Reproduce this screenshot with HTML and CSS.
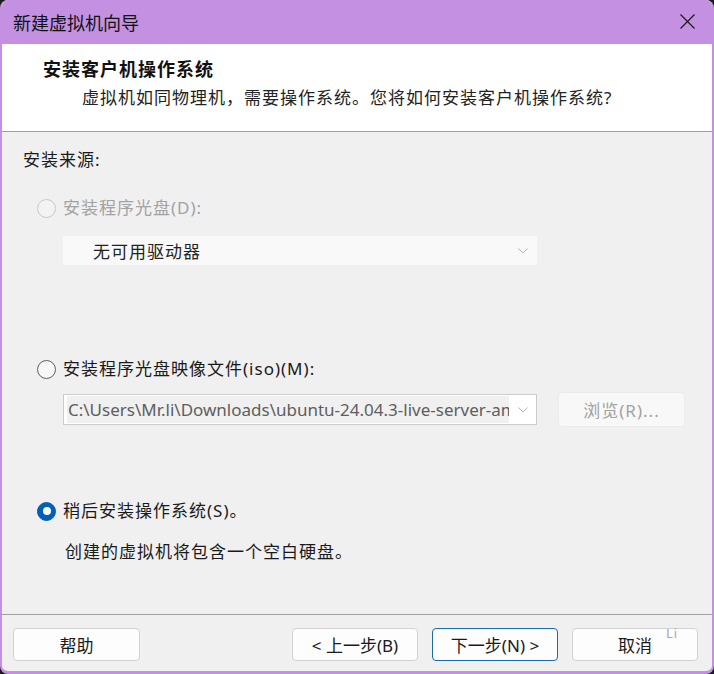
FILE: index.html
```html
<!DOCTYPE html>
<html lang="zh-CN">
<head>
  <meta charset="UTF-8" />
  <title>新建虚拟机向导</title>
  <link rel="stylesheet" href="styles.css">
</head>
<body>
  <div class="window">
    <div class="titlebar">
      <span class="title">新建虚拟机向导</span>
      <svg class="close" width="15" height="15" viewBox="0 0 15 15">
        <path d="M0.5 0.5 L14.5 14.5 M14.5 0.5 L0.5 14.5" stroke="#1a1a1a" stroke-width="1.2" fill="none" />
      </svg>
    </div>

    <div class="header">
      <div class="heading">安装客户机操作系统</div>
      <div class="subtitle">虚拟机如同物理机，需要操作系统。您将如何安装客户机操作系统?</div>
    </div>

    <div class="content">
      <div class="section-label">安装来源:</div>

      <div class="option disabled">
        <span class="radio"></span>
        <span class="label">安装程序光盘(D):</span>
      </div>
      <div class="combo combo-off">
        <span class="combo-text">无可用驱动器</span>
        <svg class="chev" width="10" height="6" viewBox="0 0 10 6">
          <path d="M0.5 0.5 L5 5 L9.5 0.5" stroke="#b4b4b4" fill="none" />
        </svg>
      </div>

      <div class="option option-iso">
        <span class="radio"></span>
        <span class="label">安装程序光盘映像文件(iso)(M):</span>
      </div>
      <div class="iso-row">
        <div class="combo combo-iso">
          <span class="combo-text path">C:\Users\Mr.li\Downloads\ubuntu-24.04.3-live-server-amd64.iso</span>
          <svg class="chev" width="10" height="6" viewBox="0 0 10 6">
            <path d="M0.5 0.5 L5 5 L9.5 0.5" stroke="#b4b4b4" fill="none" />
          </svg>
        </div>
        <button class="btn btn-browse" disabled>浏览(R)...</button>
      </div>

      <div class="option option-later">
        <span class="radio checked"></span>
        <span class="label">稍后安装操作系统(S)。</span>
      </div>
      <div class="desc">创建的虚拟机将包含一个空白硬盘。</div>
    </div>

    <div class="footer">
      <button class="btn btn-help">帮助</button>
      <div class="nav">
        <button class="btn">&lt; 上一步(B)</button>
        <button class="btn btn-default">下一步(N) &gt;</button>
        <button class="btn">取消</button>
      </div>
      <span class="mark">Li</span>
    </div>
  </div>
</body>
</html>
```

FILE: styles.css
```css
body {
  margin: 0;
  padding: 0;
  background: #1c1c1c;
  font-family: "Noto Sans", "Noto Sans CJK SC", sans-serif;
  font-size: 17px;
  color: #1a1a1a;
}

.window {
  width: 714px;
  height: 674px;
  box-sizing: border-box;
  background: #f0f0f0;
  border: 2px solid #c491e2;
  border-top: none;
  border-bottom-width: 3px;
  border-radius: 8px;
  overflow: hidden;
  display: flex;
  flex-direction: column;
}

.titlebar {
  height: 44px;
  flex: none;
  background: #c491e2;
  display: flex;
  align-items: center;
  justify-content: space-between;
  padding: 0 17px 0 11px;
}

.title {
  font-size: 18px;
  color: #111;
}

.close {
  margin-top: -1px;
}

.header {
  height: 88px;
  flex: none;
  box-sizing: border-box;
  background: #fff;
  border-bottom: 1px solid #a0a0a0;
  padding: 13px 0 0 41px;
  letter-spacing: 1px;
}

.heading {
  font-size: 18px;
  font-weight: bold;
  line-height: 24px;
  color: #111;
}

.subtitle {
  margin: 5px 0 0 39px;
  line-height: 24px;
  color: #222;
}

.content {
  flex: 1;
  padding: 16px 0 0 21px;
  letter-spacing: 1px;
}

.section-label {
  line-height: 24px;
}

.option {
  display: flex;
  align-items: center;
  gap: 7px;
  margin-left: 14px;
  line-height: 24px;
  margin-top: 24px;
}

.option.disabled {
  color: #a2a2a2;
}

.radio {
  width: 17px;
  height: 17px;
  border-radius: 50%;
  border: 1px solid #5c5c5c;
  background: #f7f7f7;
  flex: none;
  box-sizing: content-box;
}

.disabled .radio {
  border-color: #c8c8c8;
  background: #f3f3f3;
}

.radio.checked {
  border-color: #005fb8;
  background: #005fb8;
  display: flex;
  align-items: center;
  justify-content: center;
}

.radio.checked::after {
  content: "";
  width: 8px;
  height: 8px;
  border-radius: 50%;
  background: #fff;
}

.combo {
  width: 474px;
  box-sizing: border-box;
  margin-left: 40px;
  display: flex;
  align-items: center;
  justify-content: space-between;
}

.combo-off {
  height: 29px;
  margin-top: 16px;
  background: #f9f9f9;
  padding: 0 9px 0 30px;
}

.combo-text {
  color: #222;
  white-space: nowrap;
  overflow: hidden;
}

.option-iso {
  margin-top: 92px;
}

.iso-row {
  display: flex;
  align-items: center;
  gap: 21px;
  margin-top: 11px;
}

.combo-iso {
  height: 31px;
  background: #fff;
  border: 1px solid #cbcbcb;
  padding: 0 8px 0 3px;
}

.path {
  font-size: 17px;
  letter-spacing: 0;
  color: #5e5e5e;
  background: #f0f0f0;
  width: 441px;
  padding-left: 1px;
  line-height: 27px;
}

.btn {
  width: 126px;
  height: 33px;
  box-sizing: border-box;
  background: #fdfdfd;
  border: 1px solid #d2d2d2;
  border-radius: 4px;
  font-family: "Noto Sans", "Noto Sans CJK SC", sans-serif;
  font-size: 17px;
  color: #1a1a1a;
  padding: 0;
}

.btn-help {
  width: 127px;
}

.btn-browse {
  width: 127px;
  height: 35px;
  background: #f8f8f8;
  border-color: #ebebeb;
  color: #a2a2a2;
  letter-spacing: 1px;
}

.option-later {
  margin-top: 72px;
}

.desc {
  margin: 17px 0 0 42px;
  line-height: 24px;
}

.footer {
  position: relative;
  flex: none;
  height: 57px;
  box-sizing: border-box;
  border-top: 1px solid #a0a0a0;
  display: flex;
  justify-content: space-between;
  padding: 13px 14px 0 11px;
}

.nav {
  display: flex;
  gap: 14px;
}

.btn-default {
  border-color: #1d6aa8;
}

.mark {
  position: absolute;
  left: 664px;
  top: 9px;
  font-size: 13px;
  color: #a8a8a8;
  letter-spacing: 1px;
}
```
